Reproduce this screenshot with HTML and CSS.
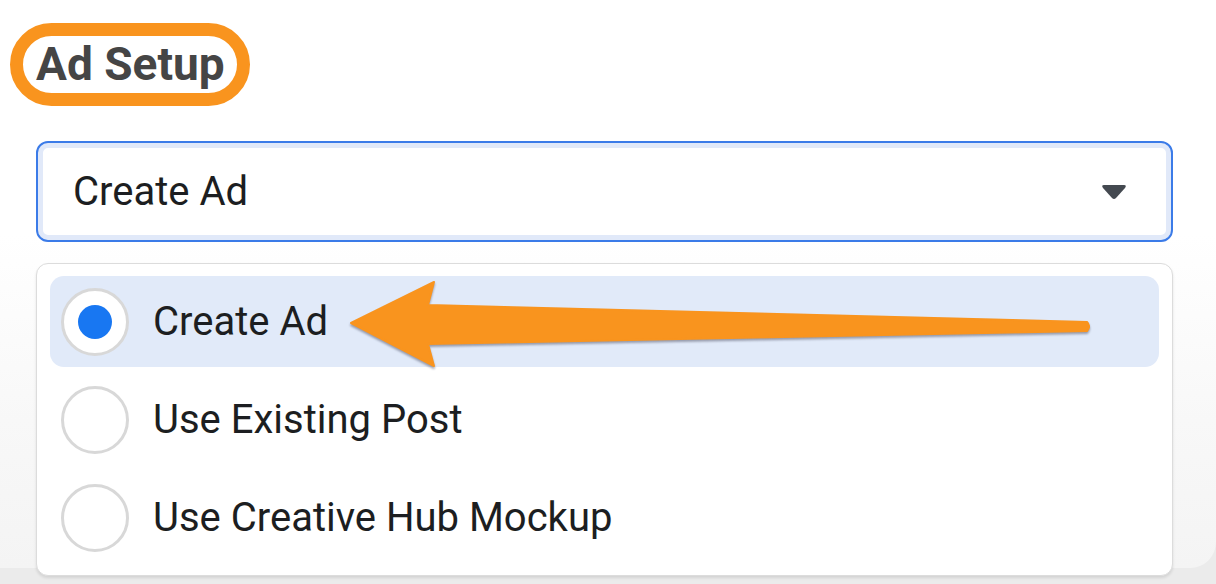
FILE: index.html
```html
<!DOCTYPE html>
<html lang="en">
<head>
    <meta charset="UTF-8">
    <meta name="viewport" content="width=device-width, initial-scale=1.0">
    <title>Ad Setup</title>
    <link rel="stylesheet" href="styles.css">
</head>
<body>
    <div class="page">
        <h2 class="title">Ad Setup</h2>
        <div class="select">
            <span class="select-value">Create Ad</span>
            <svg class="caret" width="26" height="16" viewBox="0 0 26 16">
                <path d="M3 1 H23 Q26 1 24 4 L15 14 Q13 16 11 14 L2 4 Q0 1 3 1 Z" fill="#444950"/>
            </svg>
        </div>
        <div class="menu">
            <div class="option selected">
                <span class="radio"></span>
                <span class="label">Create Ad</span>
            </div>
            <div class="option">
                <span class="radio"></span>
                <span class="label">Use Existing Post</span>
            </div>
            <div class="option">
                <span class="radio"></span>
                <span class="label">Use Creative Hub Mockup</span>
            </div>
        </div>
        <!-- annotation arrow drawn over the menu -->
        <svg class="callout" width="1216" height="584" viewBox="0 0 1216 584">
            <path d="M351 323 L434 282 L428 305 L1087 322 Q1091 326.5 1087 331 L428 344 L434 366 Z"
                  fill="#f9941e" stroke="#f9941e" stroke-width="2" stroke-linejoin="round"/>
        </svg>
    </div>
</body>
</html>
```

FILE: styles.css
```css
html, body {
    margin: 0;
    padding: 0;
    height: 100%;
}
body {
    background-color: #ebebeb;
    font-family: 'Roboto', 'Liberation Sans', sans-serif;
    color: #1c1e21;
}
.page {
    position: relative;
    height: 568px;
    padding: 23px 43px 0 36px;
    box-sizing: border-box;
    background: linear-gradient(to bottom, #fff 235px, #f8f8f8 420px, #f4f4f4);
    border-radius: 0 0 26px 0;
}
.title {
    display: inline-block;
    margin: 0 0 0 -26px;
    padding: 0 12px 0 13px;
    border: 13px solid #f9941e;
    border-radius: 44px;
    font-size: 46px;
    font-weight: 700;
    line-height: 57px;
    color: #454545;
}
.select {
    display: flex;
    align-items: center;
    justify-content: space-between;
    height: 101px;
    margin-top: 35px;
    padding: 0 44px 0 35px;
    box-sizing: border-box;
    background: #fff;
    border: 2px solid #3b7be8;
    border-radius: 12px;
    box-shadow: inset 0 0 0 5px #e1e9f9;
}
.select-value {
    font-size: 40px;
}
.menu {
    position: relative;
    z-index: 1;
    display: flex;
    flex-direction: column;
    gap: 7px;
    margin-top: 21px;
    padding: 12px 13px;
    background: #fff;
    border: 1px solid #dcdcdc;
    border-radius: 12px;
    box-shadow: 0 2px 3px rgba(0, 0, 0, 0.1);
}
.option {
    display: flex;
    align-items: center;
    gap: 24px;
    height: 91px;
    padding-left: 11px;
    border-radius: 14px;
}
.option.selected {
    background-color: #e1eaf9;
}
.radio {
    display: flex;
    align-items: center;
    justify-content: center;
    width: 68px;
    height: 68px;
    box-sizing: border-box;
    border: 3px solid #d8d8d8;
    border-radius: 50%;
    background: #fff;
}
.option.selected .radio::after {
    content: '';
    width: 34px;
    height: 34px;
    border-radius: 50%;
    background: #1877f2;
}
.label {
    font-size: 40px;
}
.callout {
    position: absolute;
    z-index: 2;
    left: 0;
    top: 0;
    pointer-events: none;
    filter: drop-shadow(0 2px 1px rgba(60, 60, 80, 0.45));
}
```
